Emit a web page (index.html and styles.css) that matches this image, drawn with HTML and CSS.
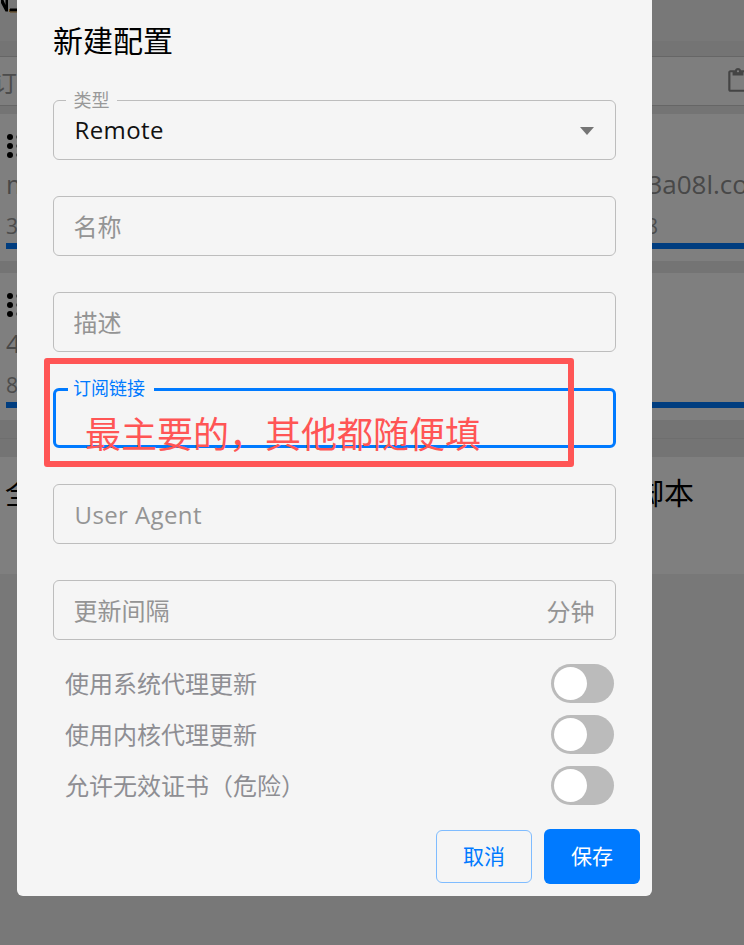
FILE: index.html
```html
<!DOCTYPE html>
<html lang="zh-CN">
<head>
    <meta charset="UTF-8">
    <meta name="viewport" content="width=device-width, initial-scale=1.0">
    <title>新建配置</title>
    <link rel="stylesheet" href="styles.css">
</head>
<body>
    <!-- page behind the dialog, mostly hidden -->
    <div class="page">
        <div class="top-bar">
            <svg class="logo" width="18" height="13" viewBox="0 0 18 13">
                <path d="M1 0h2.500l2 5V0H8v11.500H5.500L1 3z" fill="#000"/>
                <path d="M10 8.500h7.500v3H10z" fill="#000"/>
                <path d="M9 9h1v3H9zM10 11.500h7.500v1H10z" fill="#c58a2c"/>
            </svg>
        </div>
        <div class="search-wrap">
            <div class="search">
                <span class="search-text">订阅链接</span>
                <svg class="paste-icon" width="26" height="26" viewBox="0 0 24 24">
                    <path d="M19 2h-4.180C14.400.84 13.300 0 12 0S9.600.84 9.180 2H5c-1.100 0-2 .9-2 2v16c0 1.100.9 2 2 2h14c1.100 0 2-.9 2-2V4c0-1.100-.9-2-2-2m-7 0c.55 0 1 .45 1 1s-.45 1-1 1-1-.45-1-1 .45-1 1-1m7 18H5V4h2v3h10V4h2z" fill="#888"/>
                </svg>
            </div>
        </div>
        <div class="card-list">
            <div class="card">
                <svg class="grip" width="27" height="24" viewBox="0 0 27 24">
                    <circle cx="4" cy="3" r="3"/><circle cx="13.500" cy="3" r="3"/>
                    <circle cx="4" cy="12" r="3"/><circle cx="13.500" cy="12" r="3"/>
                    <circle cx="4" cy="21" r="3"/><circle cx="13.500" cy="21" r="3"/>
                </svg>
                <div class="name-row">
                    <span>mihomo</span>
                    <span>https://sub.3a08l.com</span>
                </div>
                <div class="stat-row">
                    <span>3.2GB</span>
                    <span>2025-03-18</span>
                </div>
                <div class="progress"></div>
            </div>
            <div class="card">
                <svg class="grip" width="27" height="24" viewBox="0 0 27 24">
                    <circle cx="4" cy="3" r="3"/><circle cx="13.500" cy="3" r="3"/>
                    <circle cx="4" cy="12" r="3"/><circle cx="13.500" cy="12" r="3"/>
                    <circle cx="4" cy="21" r="3"/><circle cx="13.500" cy="21" r="3"/>
                </svg>
                <div class="name-row">
                    <span>4</span>
                </div>
                <div class="stat-row">
                    <span>8</span>
                </div>
                <div class="progress"></div>
            </div>
        </div>
        <div class="divider-band"><div class="divider"></div></div>
        <div class="global-card">
            <span>全局扩展配置</span>
            <span>全局扩展脚本</span>
        </div>
    </div>

    <div class="backdrop"></div>

    <div class="dialog">
        <h2 class="dialog-title">新建配置</h2>

        <div class="form">
            <div class="field">
                <span class="field-label">类型</span>
                <span class="field-value latin">Remote</span>
                <span class="select-arrow"></span>
            </div>
            <div class="field">
                <input class="field-input" type="text" placeholder="名称">
            </div>
            <div class="field">
                <input class="field-input" type="text" placeholder="描述">
            </div>
            <div class="field field-focused">
                <span class="field-label">订阅链接</span>
                <input class="field-input" type="text">
            </div>
            <div class="field">
                <input class="field-input latin" type="text" placeholder="User Agent">
            </div>
            <div class="field">
                <input class="field-input" type="text" placeholder="更新间隔">
                <span class="field-unit">分钟</span>
            </div>
        </div>

        <div class="switches">
            <div class="switch-row">
                <span class="switch-label">使用系统代理更新</span>
                <span class="switch"><span class="thumb"></span></span>
            </div>
            <div class="switch-row">
                <span class="switch-label">使用内核代理更新</span>
                <span class="switch"><span class="thumb"></span></span>
            </div>
            <div class="switch-row">
                <span class="switch-label">允许无效证书（危险）</span>
                <span class="switch"><span class="thumb"></span></span>
            </div>
        </div>

        <div class="actions">
            <button class="btn btn-cancel">取消</button>
            <button class="btn btn-save">保存</button>
        </div>

        <!-- red note drawn over the screenshot -->
        <div class="note-box"></div>
        <div class="note-text">最主要的，其他都随便填</div>
    </div>
</body>
</html>
```

FILE: styles.css
```css
* {
    box-sizing: border-box;
}
html, body {
    height: 100%;
}
body {
    margin: 0;
    overflow: hidden;
    background-color: #f1f1f1;
    font-family: "Open Sans", "Noto Sans CJK SC", sans-serif;
}

/* page behind the backdrop */
.top-bar {
    height: 41px;
}
.logo {
    display: block;
}
.search-wrap {
    background-color: #e8e8e8;
    padding: 15px 0 8px;
}
.search {
    height: 50px;
    display: flex;
    align-items: center;
    justify-content: space-between;
    background-color: #fcfcfc;
    border-top: 1px solid #ccc;
    border-bottom: 1px solid #ccc;
}
.search-text {
    margin-left: -7px;
    font-size: 24px;
    color: #999;
}
.paste-icon {
    margin-right: -7px;
}
.card-list {
    display: flex;
    flex-direction: column;
    gap: 12px;
    background-color: #e8e8e8;
}
.card {
    height: 147px;
    padding: 20px 0 0 6px;
    background-color: #fff;
}
.grip {
    display: block;
}
.name-row {
    display: flex;
    justify-content: space-between;
    margin: 8px -28px 0 0;
    font-size: 26px;
    line-height: 36px;
    color: #909090;
    white-space: nowrap;
}
.stat-row {
    display: flex;
    justify-content: space-between;
    height: 28px;
    margin-top: 10px;
    padding-right: 86px;
    font-size: 21px;
    line-height: 28px;
    color: #999;
}
.progress {
    height: 6px;
    margin-top: 3px;
    background-color: #007aff;
}
.divider-band {
    height: 37px;
    padding-top: 18px;
    background-color: #e8e8e8;
}
.divider {
    height: 1px;
    background-color: #ddd;
}
.global-card {
    display: flex;
    justify-content: space-between;
    height: 117px;
    padding: 15px 50px 0 5px;
    background-color: #fff;
    font-size: 30px;
    line-height: 42px;
    color: #000;
}

.backdrop {
    position: fixed;
    inset: 0;
    background-color: rgba(0, 0, 0, 0.5);
}

/* dialog */
.dialog {
    position: fixed;
    left: 17px;
    top: 0;
    width: 635px;
    height: 896px;
    padding: 0 12px 12px 36px;
    background-color: #f5f5f5;
    border-radius: 0 0 6px 6px;
    display: flex;
    flex-direction: column;
}
.dialog-title {
    height: 82px;
    margin: 0 0 18px;
    font-size: 30px;
    font-weight: 400;
    line-height: 82px;
    color: #000;
}
.form {
    display: flex;
    flex-direction: column;
    gap: 36px;
    width: 563px;
}
.field {
    position: relative;
    height: 60px;
    display: flex;
    align-items: center;
    padding: 0 20.5px 0 19.5px;
    border: 1.5px solid #bdbdbd;
    border-radius: 6px;
    font-size: 24px;
}
.field-focused {
    border: 3px solid #007aff;
    padding-left: 18px;
}
.field-label {
    position: absolute;
    left: 12px;
    top: -13px;
    padding: 0 7.5px;
    background-color: #f5f5f5;
    font-size: 18px;
    line-height: 24px;
    color: #999;
}
.field-focused .field-label {
    top: -15px;
    padding: 0 9px 0 5px;
    color: #007aff;
}
.latin {
    letter-spacing: 0.4px;
}
.field-value {
    margin: -2px 0 0 1px;
    color: #111;
}
.field-input {
    flex: 1;
    min-width: 0;
    padding: 0;
    border: none;
    outline: none;
    background: transparent;
    font: inherit;
    color: #111;
}
.field-input.latin {
    margin-left: 1px;
}
.field-input::placeholder {
    color: #949494;
    opacity: 1;
}
.field-unit {
    color: #949494;
}
.select-arrow {
    position: absolute;
    right: 21px;
    top: 26px;
    border-left: 7.5px solid transparent;
    border-right: 7.5px solid transparent;
    border-top: 8px solid #757575;
}
.switches {
    display: flex;
    flex-direction: column;
    gap: 12px;
    width: 561px;
    margin-top: 24px;
    padding-left: 12px;
}
.switch-row {
    display: flex;
    align-items: center;
    justify-content: space-between;
    height: 39px;
    font-size: 24px;
    color: #8e8e93;
}
.switch-label {
    margin-top: -2px;
}
.switch {
    width: 63px;
    height: 39px;
    padding: 3px;
    border-radius: 20px;
    background-color: #bbb;
}
.thumb {
    display: block;
    width: 33px;
    height: 33px;
    border-radius: 50%;
    background-color: #fff;
}
.actions {
    display: flex;
    align-items: center;
    justify-content: flex-end;
    gap: 12px;
    margin-top: auto;
}
.btn {
    width: 96px;
    padding: 0 0 4px;
    border-radius: 6px;
    font: inherit;
    font-size: 21px;
}
.btn-cancel {
    height: 53px;
    border: 1.5px solid #7fbcff;
    background: transparent;
    color: #007aff;
}
.btn-save {
    height: 55px;
    border: none;
    background-color: #007aff;
    color: #fff;
}

/* annotation */
.note-box {
    position: absolute;
    left: 27px;
    top: 358px;
    width: 530px;
    height: 109px;
    border: 6px solid #ff5555;
    border-radius: 3px;
}
.note-text {
    position: absolute;
    left: 68px;
    top: 410px;
    font-size: 36px;
    line-height: 50px;
    color: #ff5555;
    white-space: nowrap;
}
```
